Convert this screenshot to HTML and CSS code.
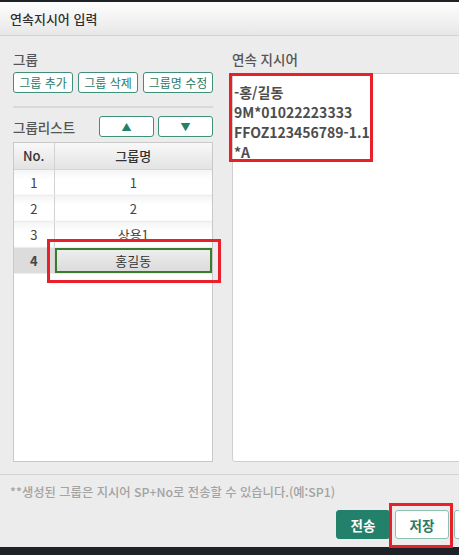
FILE: index.html
```html
<!DOCTYPE html>
<html lang="ko">
<head>
    <meta charset="UTF-8">
    <meta name="viewport" content="width=device-width, initial-scale=1.0">
    <title>연속지시어 입력</title>
    <link rel="stylesheet" href="styles.css">
</head>
<body>
    <div class="window">
        <div class="titlebar">연속지시어 입력</div>

        <div class="content">
            <div class="left">
                <div class="label">그룹</div>
                <div class="btn-row">
                    <button class="btn w60">그룹 추가</button>
                    <button class="btn w60">그룹 삭제</button>
                    <button class="btn w70">그룹명 수정</button>
                </div>
                <div class="sep"></div>
                <div class="list-head">
                    <div class="label">그룹리스트</div>
                    <div class="arrows">
                        <button class="btn arrow">&#9650;</button>
                        <button class="btn arrow">&#9660;</button>
                    </div>
                </div>
                <div class="table-wrap">
                    <table class="grid">
                        <thead>
                            <tr><th class="no">No.</th><th>그룹명</th></tr>
                        </thead>
                        <tbody>
                            <tr><td class="no">1</td><td>1</td></tr>
                            <tr><td class="no">2</td><td>2</td></tr>
                            <tr><td class="no">3</td><td>상용1</td></tr>
                            <tr class="selected"><td class="no">4</td><td class="name">홍길동</td></tr>
                        </tbody>
                    </table>
                </div>
                <div class="mark mark-row"></div>
            </div>

            <div class="right">
                <div class="label">연속 지시어</div>
                <textarea class="codes" readonly>-홍/길동
9M*01022223333
FFOZ123456789-1.1
*A</textarea>
                <div class="mark mark-codes"></div>
            </div>
        </div>

        <div class="footer">
            <div class="note">**생성된 그룹은 지시어 SP+No로 전송할 수 있습니다.(예:SP1)</div>
            <div class="actions">
                <button class="action primary">전송</button>
                <button class="action">저장</button>
                <button class="action" aria-label="닫기"></button>
            </div>
            <div class="mark mark-save"></div>
        </div>
    </div>
</body>
</html>
```

FILE: styles.css
```css
* {
    box-sizing: border-box;
}

body {
    margin: 0;
    height: 555px;
    overflow: hidden;
    background-color: #1e2227;
    font-family: "Noto Sans CJK KR", "Noto Sans", sans-serif;
}

.window {
    margin-top: 2px;
    width: 520px;
    height: 545px;
    background-color: #ececec;
    display: flex;
    flex-direction: column;
}

.titlebar {
    height: 34px;
    padding-left: 10px;
    line-height: 33px;
    font-size: 13px;
    font-weight: 500;
    color: #2f2f2f;
    background: linear-gradient(#fefefe, #e7e7e7);
    border-bottom: 1px solid #d3d3d3;
}

.content {
    display: flex;
    gap: 19px;
    height: 426px;
    padding: 14px 0 0 13px;
}

.left {
    position: relative;
    width: 200px;
    display: flex;
    flex-direction: column;
}

.label {
    font-size: 13.5px;
    line-height: 18px;
    font-weight: 500;
    color: #555;
}

.btn-row {
    display: flex;
    gap: 5px;
    margin-top: 4px;
}

.btn {
    height: 21px;
    padding: 0;
    background-color: #fff;
    border: 1px solid #3f8f7a;
    border-radius: 3px;
    color: #2b7a66;
    font-family: inherit;
    font-size: 12px;
    line-height: 18px;
}

.w60 {
    width: 60px;
}

.w70 {
    width: 70px;
}

.sep {
    height: 2px;
    margin: 13px 0 8px;
    background-color: #d9d9d9;
}

.list-head {
    display: flex;
    align-items: center;
    justify-content: space-between;
    height: 21px;
}

.arrows {
    display: flex;
    gap: 4px;
}

.arrow {
    width: 55px;
    font-size: 10px;
    color: #23806b;
}

.table-wrap {
    flex: 1;
    margin-top: 5px;
    background-color: #fff;
    border: 1px solid #c9c9c9;
}

.grid {
    width: 100%;
    border-collapse: collapse;
    table-layout: fixed;
    font-size: 13px;
    color: #444;
}

.grid th {
    height: 26px;
    font-weight: 500;
    color: #333;
    background: linear-gradient(#f8f8f8, #e3e3e3);
    border-bottom: 1px solid #d6d6d6;
}

.grid td {
    height: 26px;
    text-align: center;
    background: linear-gradient(#f4f4f4, #ffffff 40%);
    border-bottom: 1px solid #ededed;
}

.grid .no {
    width: 40px;
    border-right: 1px solid #d2d2d2;
}

.selected td.no {
    font-weight: 700;
    background: #dcdcdc;
}

.selected td.name {
    color: #333;
    background: linear-gradient(#efefef, #dadada);
    box-shadow: inset 0 0 0 2px #3b7b2c;
}

.right {
    position: relative;
    flex: 1;
    display: flex;
    flex-direction: column;
}

.codes {
    flex: 1;
    margin: 5px 0 0;
    padding: 8px 1px 0;
    resize: none;
    background-color: #fff;
    border: 1px solid #cfcfcf;
    border-radius: 3px;
    font-family: inherit;
    font-size: 14px;
    font-weight: 700;
    line-height: 20px;
    color: #4d4d4d;
    outline: none;
}

.footer {
    position: relative;
    margin-top: 12px;
    border-top: 1px solid #d4d4d4;
}

.note {
    padding: 8px 0 0 10px;
    font-size: 12.3px;
    line-height: 18px;
    font-weight: 500;
    color: #a3a3a3;
}

.actions {
    display: flex;
    justify-content: flex-end;
    gap: 5px;
    margin-top: 9px;
    padding-right: 12px;
}

.action {
    width: 54px;
    height: 29px;
    padding: 0;
    background-color: #fff;
    border: 1px solid #8cc0b2;
    border-radius: 3px;
    color: #2b7a66;
    font-family: inherit;
    font-size: 13.5px;
    font-weight: 700;
}

.action.primary {
    background-color: #23806b;
    border-color: #23806b;
    color: #fff;
}

/* red highlight boxes drawn over the screenshot */
.mark {
    position: absolute;
    border: 3px solid #e8202a;
    pointer-events: none;
}

.mark-row {
    left: 34px;
    top: 189px;
    width: 174px;
    height: 44px;
}

.mark-codes {
    left: -3px;
    top: 23px;
    width: 144px;
    height: 89px;
}

.mark-save {
    left: 389px;
    top: 28px;
    width: 64px;
    height: 45px;
}
```
